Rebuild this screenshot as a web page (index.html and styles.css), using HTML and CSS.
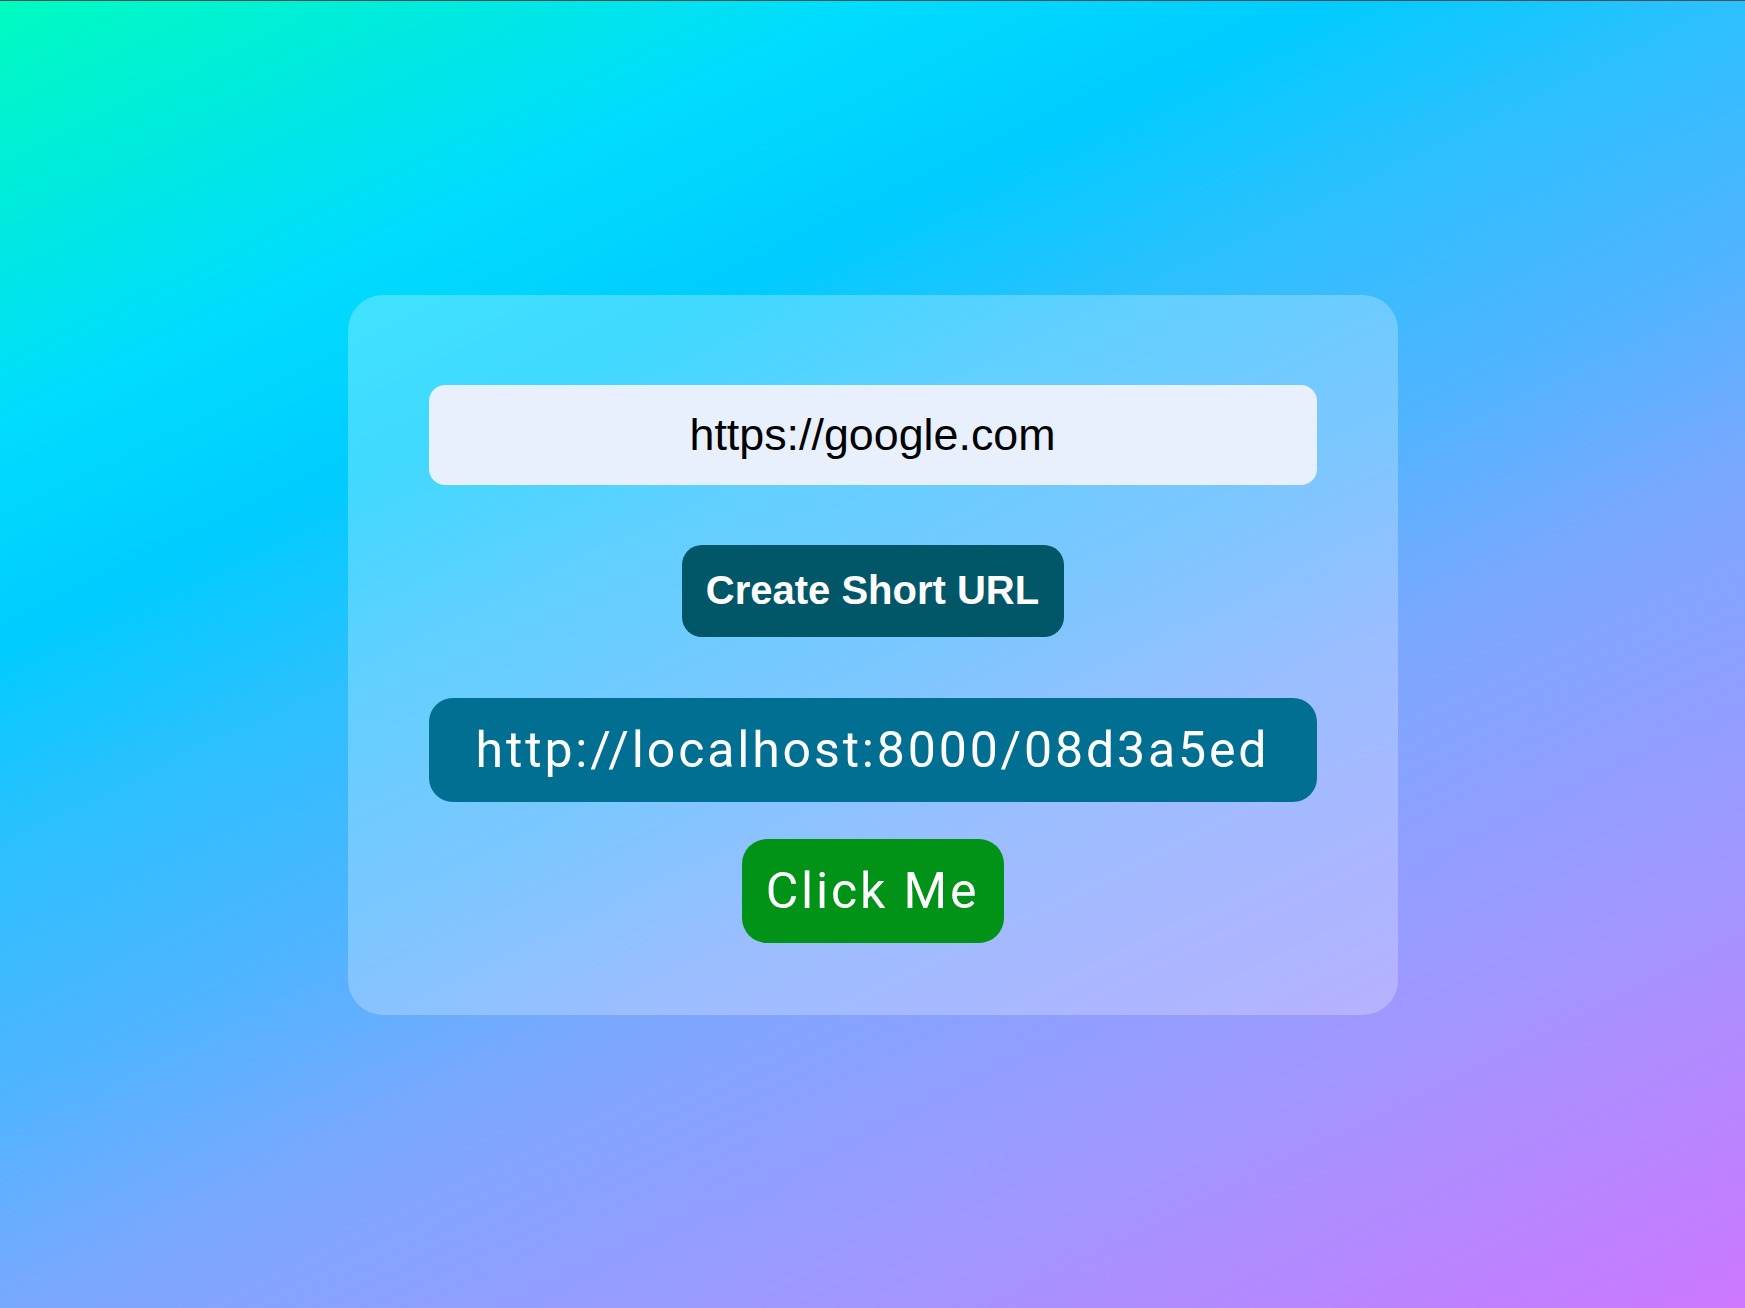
FILE: index.html
```html
<!DOCTYPE html>
<html lang="en">
<head>
<meta charset="utf-8">
<title>URL Shortener</title>
<link rel="stylesheet" href="styles.css">
</head>
<body>
  <main class="card">
    <input class="url-input" type="text" value="https://google.com">
    <button class="create-btn" type="button">Create Short URL</button>
    <div class="result">http://localhost:8000/08d3a5ed</div>
    <button class="click-btn" type="button">Click Me</button>
  </main>
</body>
</html>
```
FILE: styles.css
```css
* {
  box-sizing: border-box;
}

html,
body {
  margin: 0;
  height: 100%;
}

body {
  border-top: 1px solid #505050;
  background: linear-gradient(154deg,
    #00fcc0 0%,
    #00e8e2 11.4%,
    #00dcff 20%,
    #00ccff 30%,
    #2cc0ff 39.4%,
    #50b4ff 51%,
    #7aa8ff 61%,
    #a296ff 80%,
    #cc77ff 100%);
  display: flex;
  align-items: center;
  justify-content: center;
  font-family: "Liberation Sans", Arial, sans-serif;
}

.card {
  width: 1050px;
  height: 720px;
  padding: 90px 81px 0;
  border-radius: 35px;
  background: rgba(255, 255, 255, 0.25);
  display: flex;
  flex-direction: column;
  align-items: center;
}

.url-input {
  width: 100%;
  height: 100px;
  border: none;
  outline: none;
  border-radius: 16px;
  background: #e8f0fe;
  color: #000;
  font-family: "Liberation Sans", Arial, sans-serif;
  font-size: 44.8px;
  text-align: center;
  padding: 0 20px;
}

.create-btn {
  margin-top: 60px;
  width: 382px;
  height: 92px;
  border: none;
  border-radius: 20px;
  background: #015667;
  color: #fff;
  font-family: "Liberation Sans", Arial, sans-serif;
  font-weight: 700;
  font-size: 40px;
  padding: 0;
}

.result {
  margin-top: 61px;
  width: 100%;
  height: 104px;
  border-radius: 24px;
  background: #016f91;
  color: #fff;
  font-family: Roboto, sans-serif;
  font-size: 50px;
  letter-spacing: 2.85px;
  display: flex;
  align-items: center;
  justify-content: center;
}

.click-btn {
  margin-top: 37px;
  width: 262px;
  height: 104px;
  border: none;
  border-radius: 25px;
  background: #019318;
  color: #fff;
  font-family: Roboto, sans-serif;
  font-size: 50px;
  letter-spacing: 2.85px;
  padding: 0;
}
```
